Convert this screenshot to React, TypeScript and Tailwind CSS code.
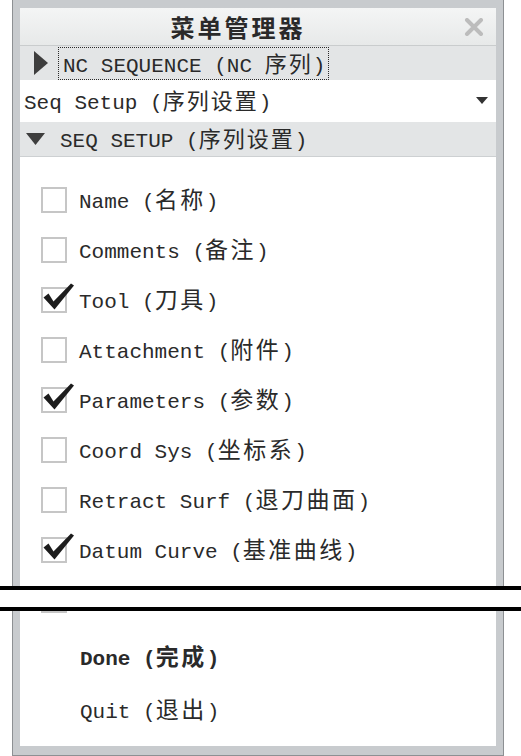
import React from "react"

const items = [
  { en: "Name", zh: "名称", checked: false },
  { en: "Comments", zh: "备注", checked: false },
  { en: "Tool", zh: "刀具", checked: true },
  { en: "Attachment", zh: "附件", checked: false },
  { en: "Parameters", zh: "参数", checked: true },
  { en: "Coord Sys", zh: "坐标系", checked: false },
  { en: "Retract Surf", zh: "退刀曲面", checked: false },
  { en: "Datum Curve", zh: "基准曲线", checked: true },
]

function Label({
  en,
  pre = "",
  zh,
  bold = false,
  wide = false,
}: {
  en: string
  pre?: string
  zh: string
  bold?: boolean
  wide?: boolean
}) {
  return (
    <span
      className={`font-['Liberation_Mono',monospace] text-[21px] leading-none whitespace-nowrap text-[#2a2a2a] ${
        bold ? "font-bold" : ""
      }`}
    >
      {en} ({pre}
      <span
        className={`font-['Noto_Sans_CJK_SC',sans-serif] ${
          wide ? "text-[23px] tracking-[2.5px]" : "text-[22px] tracking-[2px]"
        } ${bold ? "font-bold" : "font-normal"}`}
      >
        {zh}
      </span>
      )
    </span>
  )
}

function Checkbox({ checked }: { checked: boolean }) {
  return (
    <div className="relative w-[26px] h-[26px] shrink-0 border-2 border-[#c6c6c6] bg-white">
      {checked && (
        <svg className="absolute left-[-2px] top-[-2px] overflow-visible" width="34" height="28" viewBox="0 0 34 28">
          <path d="M2.5 10.5 L7.5 6.5 L12.5 14.5 L30 -3.5 L33 -1.5 L13.5 22.5 Z" fill="#1c1c1c" />
        </svg>
      )}
    </div>
  )
}

export default function App() {
  return (
    <div className="relative w-[521px] h-[756px] bg-white overflow-hidden">
      <div className="ml-[12px] w-[492px] border-x border-b border-[#8d9093] bg-[#c8cbce] pt-[8px] px-[7px] pb-[9px]">
        <div className="bg-white">
          {/* title bar */}
          <div className="flex items-center h-[38px] border-b border-[#c9cccd] bg-gradient-to-b from-[#f4f5f5] to-[#e7e9e9]">
            <div className="flex-1 text-center font-['Noto_Sans_CJK_SC',sans-serif] font-bold text-[24px] tracking-[3px] text-[#2a2a2a] leading-none">
              菜单管理器
            </div>
            <div className="w-[40px] flex items-center">
              <svg width="20" height="18" viewBox="0 0 20 18" className="ml-[8px]">
                <path d="M3 2 L17 16 M17 2 L3 16" stroke="#bcbcbc" strokeWidth="4" strokeLinecap="round" />
              </svg>
            </div>
          </div>

          {/* NC SEQUENCE */}
          <div className="flex items-center h-[34px] bg-[#e3e5e6] pl-[14px]">
            <svg width="14" height="24" viewBox="0 0 14 24" className="shrink-0">
              <path d="M0 0 L14 12 L0 24 Z" fill="#3e3e3e" />
            </svg>
            <div className="ml-[10px] h-[33px] mt-[1px] flex items-center border border-dotted border-[#2a2a2a] pl-[4px] pr-[3px]">
              <Label en="NC SEQUENCE" pre="NC " zh="序列" />
            </div>
          </div>

          {/* dropdown */}
          <div className="flex items-center justify-between h-[42px] bg-white pl-[4px] pr-[8px]">
            <Label en="Seq Setup" zh="序列设置" />
            <svg width="12" height="8" viewBox="0 0 12 8">
              <path d="M0 0 L12 0 L6 7 Z" fill="#333" />
            </svg>
          </div>

          {/* SEQ SETUP */}
          <div className="flex items-center h-[35px] bg-[#e3e5e6] border-b border-[#cdd0d2] pl-[6px]">
            <svg width="19" height="12" viewBox="0 0 19 12" className="shrink-0">
              <path d="M0 0 L19 0 L9.5 12 Z" fill="#3e3e3e" />
            </svg>
            <div className="ml-[15px]">
              <Label en="SEQ SETUP" zh="序列设置" />
            </div>
          </div>

          {/* list */}
          <div className="pt-[18px]">
            {items.map((it) => (
              <div key={it.en} className="flex items-center h-[50px] pl-[21px] gap-[12px]">
                <Checkbox checked={it.checked} />
                <Label en={it.en} zh={it.zh} wide />
              </div>
            ))}
            {/* row hidden behind the figure break */}
            <div className="flex items-center h-[50px] pl-[21px]">
              <Checkbox checked={false} />
            </div>
          </div>

          <div className="mt-[7px] flex items-center h-[50px] pl-[60px]">
            <Label en="Done" zh="完成" bold wide />
          </div>
          <div className="flex items-center h-[56px] pl-[60px]">
            <Label en="Quit" zh="退出" wide />
          </div>
          <div className="h-[8px]" />
        </div>
      </div>

      {/* figure break */}
      <div className="absolute left-0 right-0 top-[586px] h-[25px] bg-white border-y-4 border-black" />
    </div>
  )
}
